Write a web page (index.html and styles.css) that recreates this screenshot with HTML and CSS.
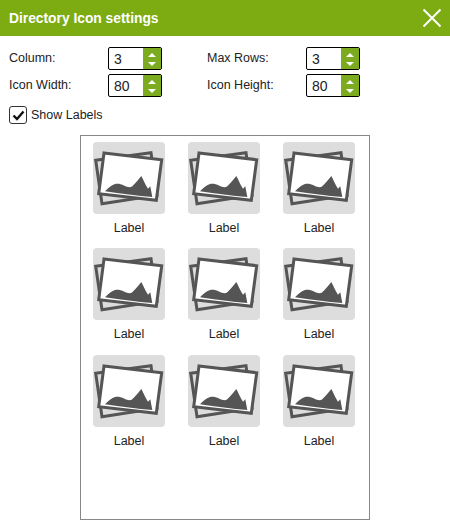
FILE: index.html
```html
<!DOCTYPE html>
<html lang="en">
<head>
    <meta charset="UTF-8">
    <title>Directory Icon settings</title>
    <link rel="stylesheet" href="styles.css">
</head>
<body>

    <div class="header">
        <span class="title">Directory Icon settings</span>
        <svg class="close" width="20" height="20" viewBox="0 0 20 20">
            <path d="M1.5 1.5L18.5 18.5M18.5 1.5L1.5 18.5" stroke="#fff" stroke-width="2" fill="none"/>
        </svg>
    </div>

    <div class="form">
        <label class="field-label">Column:</label>
        <div class="spinner">
            <span class="value">3</span>
            <div class="arrows"><i class="up"></i><i class="down"></i></div>
        </div>
        <label class="field-label second">Max Rows:</label>
        <div class="spinner">
            <span class="value">3</span>
            <div class="arrows"><i class="up"></i><i class="down"></i></div>
        </div>
        <label class="field-label">Icon Width:</label>
        <div class="spinner">
            <span class="value">80</span>
            <div class="arrows"><i class="up"></i><i class="down"></i></div>
        </div>
        <label class="field-label second">Icon Height:</label>
        <div class="spinner">
            <span class="value">80</span>
            <div class="arrows"><i class="up"></i><i class="down"></i></div>
        </div>
    </div>

    <div class="show-labels">
        <span class="checkbox">
            <svg width="13" height="11" viewBox="0 0 13 11">
                <path d="M1.5 5.5L5 9L11.5 1.5" stroke="#111" stroke-width="2.4" fill="none"/>
            </svg>
        </span>
        Show Labels
    </div>

    <svg width="0" height="0" class="defs">
        <symbol id="photos" viewBox="0 0 72 72">
            <path d="M2.7 18.3L58 10.7L64 53.3L9 61.7Z" fill="#ddd" stroke="#555" stroke-width="3"/>
            <path d="M11 11L68.7 17.7L63.3 58.3L5.7 51.7Z" fill="#fff" stroke="#555" stroke-width="3"/>
            <path d="M12 49.3C15 46.5 18 43 22 42C25 41.5 28 42 31 43.5C34 45 37 46 39 44.5C42 42 45 38 48.3 34C50 37 52 42 55 46.7L57.3 44.3L59.3 55C44 54 28 51.5 12 49.3Z" fill="#555"/>
        </symbol>
    </svg>

    <div class="preview">
        <div class="item"><div class="tile"><svg class="icon"><use href="#photos"/></svg></div><div class="label">Label</div></div>
        <div class="item"><div class="tile"><svg class="icon"><use href="#photos"/></svg></div><div class="label">Label</div></div>
        <div class="item"><div class="tile"><svg class="icon"><use href="#photos"/></svg></div><div class="label">Label</div></div>
        <div class="item"><div class="tile"><svg class="icon"><use href="#photos"/></svg></div><div class="label">Label</div></div>
        <div class="item"><div class="tile"><svg class="icon"><use href="#photos"/></svg></div><div class="label">Label</div></div>
        <div class="item"><div class="tile"><svg class="icon"><use href="#photos"/></svg></div><div class="label">Label</div></div>
        <div class="item"><div class="tile"><svg class="icon"><use href="#photos"/></svg></div><div class="label">Label</div></div>
        <div class="item"><div class="tile"><svg class="icon"><use href="#photos"/></svg></div><div class="label">Label</div></div>
        <div class="item"><div class="tile"><svg class="icon"><use href="#photos"/></svg></div><div class="label">Label</div></div>
    </div>

</body>
</html>
```

FILE: styles.css
```css
body {
    margin: 0;
    background-color: white;
    font-family: "Liberation Sans", Arial, sans-serif;
    font-size: 12.5px;
    color: #222;
}
.header {
    height: 36px;
    padding: 0 8px 0 9px;
    display: flex;
    align-items: center;
    justify-content: space-between;
    background-color: #7cab12;
    color: white;
}
.title {
    font-size: 13.8px;
    font-weight: bold;
}
.form {
    display: grid;
    grid-template-columns: 99px 54px 144px 54px;
    grid-auto-rows: 23px;
    row-gap: 4px;
    padding: 11px 0 0 9px;
}
.field-label {
    line-height: 23px;
}
.field-label.second {
    padding-left: 45px;
}
.spinner {
    display: flex;
    box-sizing: border-box;
    border: 1px solid black;
    border-radius: 2px;
    background-color: white;
}
.value {
    flex: 1;
    padding-left: 5px;
    font-size: 14px;
    line-height: 22px;
}
.arrows {
    width: 18px;
    display: flex;
    flex-direction: column;
    align-items: center;
    justify-content: space-between;
    padding: 5px 0 3px;
    box-sizing: border-box;
    background-color: #7cab1f;
}
.arrows i {
    display: block;
    width: 0;
    height: 0;
    border-left: 4px solid transparent;
    border-right: 4px solid transparent;
}
.arrows .up {
    border-bottom: 4px solid #fff;
}
.arrows .down {
    border-top: 4px solid #fff;
}
.show-labels {
    display: flex;
    align-items: center;
    gap: 4px;
    margin: 9px 0 0 9px;
    height: 18px;
}
.checkbox {
    box-sizing: border-box;
    width: 18px;
    height: 18px;
    border: 1px solid #333;
    border-radius: 3px;
    display: flex;
    align-items: center;
    justify-content: center;
}
.defs {
    position: absolute;
}
.preview {
    box-sizing: border-box;
    width: 290px;
    height: 385px;
    margin: 11px 0 0 80px;
    padding: 6px 0 0 12px;
    border: 1px solid #888;
    display: grid;
    grid-template-columns: repeat(3, 95px);
    grid-auto-rows: 106.4px;
}
.tile {
    width: 72px;
    height: 72px;
    background-color: #ddd;
    border-radius: 4px;
}
.icon {
    display: block;
    width: 72px;
    height: 72px;
}
.label {
    width: 72px;
    margin-top: 7px;
    text-align: center;
    font-size: 12.5px;
    line-height: 15px;
}
```
